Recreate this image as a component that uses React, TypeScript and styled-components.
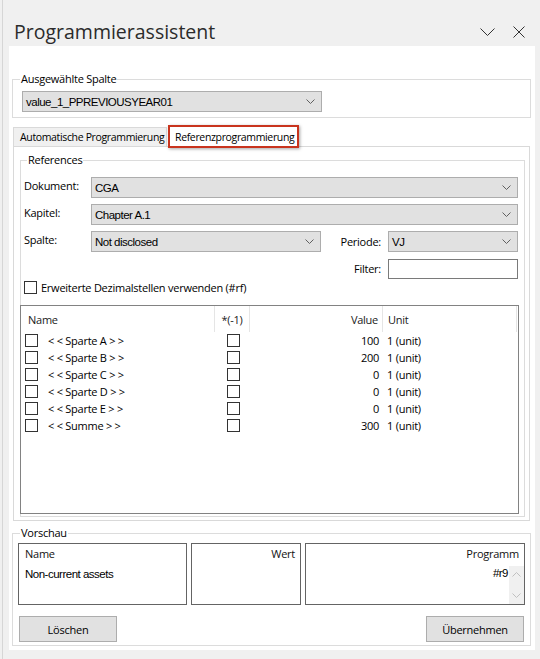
import React from "react";
import styled, { createGlobalStyle } from "styled-components";

const ui = `"Open Sans", "Noto Sans", sans-serif`;
const classic = `"Liberation Sans", Arial, sans-serif`;

const Global = createGlobalStyle`
  html, body { margin: 0; padding: 0; background: #f0f0f0; }
  body { font-family: ${ui}; font-size: 11px; letter-spacing: -0.25px; color: #000; }
  * { box-sizing: border-box; }
`;

const Shell = styled.div`
  width: 540px;
  height: 659px;
  background: #f0f0f0;
  display: flex;
  overflow: hidden;
`;

const EdgeLine = styled.div`
  flex: none;
  width: 1px;
  margin-left: 2px;
  background: #d6d6d6;
`;

const Window = styled.div`
  flex: 1;
  display: flex;
  flex-direction: column;
  padding: 0 5px 0 6px;
`;

const TitleBar = styled.div`
  height: 46px;
  display: flex;
  align-items: flex-end;
  justify-content: space-between;
`;

const Title = styled.div`
  font-family: ${ui};
  font-size: 19.5px;
  letter-spacing: 0;
  line-height: 28px;
  color: #2b2b2b;
  padding-left: 5px;
`;

const Controls = styled.div`
  display: flex;
`;

const IconButton = styled.div`
  width: 32px;
  height: 28px;
  display: flex;
  align-items: center;
  justify-content: center;
  color: #333;
`;

const Panel = styled.div`
  width: 526px;
  height: 604px;
  background: #fff;
  padding: 26px 4px 4px 3px;
  display: flex;
  flex-direction: column;
`;

const Group = styled.fieldset<{ $pad: string; $top?: number }>`
  margin: ${(p) => p.$top || 0}px 0 0 0;
  min-width: 0;
  border: 1px solid #dcdcdc;
  padding: ${(p) => p.$pad};
`;

const Legend = styled.legend<{ $shift: number }>`
  padding: 0 1px;
  margin-left: ${(p) => p.$shift}px;
  font-size: 11px;
  line-height: 14px;
  color: #000;
`;

const Select = styled.div<{ $w?: number }>`
  height: 21px;
  width: ${(p) => (p.$w ? `${p.$w}px` : "auto")};
  background: #e1e1e1;
  border: 1px solid #adadad;
  display: flex;
  align-items: center;
  justify-content: space-between;
  padding: 0 6px 0 3px;
  font-family: ${classic};
  font-size: 11.5px;
  letter-spacing: -0.5px;
  color: #000;
`;

const Chevron = () => (
  <svg width="9" height="5" viewBox="0 0 9 5">
    <path d="M0.5 0.5 L4.5 4.5 L8.5 0.5" fill="none" stroke="#606060" strokeWidth="1" />
  </svg>
);

const Tabs = styled.div`
  margin: 7px 1px 0 1px;
  display: flex;
  flex-direction: column;
`;

const TabStrip = styled.div`
  height: 21px;
  display: flex;
  align-items: flex-end;
  gap: 1px;
`;

const Tab = styled.div<{ $active?: boolean; $w: number }>`
  width: ${(p) => p.$w}px;
  height: ${(p) => (p.$active ? 23 : 19)}px;
  margin-bottom: ${(p) => (p.$active ? -2 : 0)}px;
  position: relative;
  z-index: ${(p) => (p.$active ? 2 : 0)};
  background: ${(p) => (p.$active ? "#fff" : "#f0f0f0")};
  border: ${(p) => (p.$active ? "2px solid #c9341e" : "1px solid #d9d9d9")};
  border-bottom: ${(p) => (p.$active ? "2px solid #c9341e" : "none")};
  box-shadow: ${(p) => (p.$active ? "1px 1px 3px rgba(0,0,0,0.35)" : "none")};
  padding: 0 0 0 ${(p) => (p.$active ? 5 : 6)}px;
  display: flex;
  align-items: center;
  font-size: 10.5px;
  letter-spacing: -0.35px;
  white-space: nowrap;
`;

const TabPage = styled.div`
  border: 1px solid #d9d9d9;
  background: #fff;
  padding: 6px 4px 3px 6px;
`;

const FormGrid = styled.div`
  display: grid;
  grid-template-columns: 67px 230px 67px 130px;
  grid-template-rows: 21px 21px 21px 21px;
  row-gap: 6px;
`;

const Label = styled.div<{ $right?: boolean; $col?: string; $mid?: boolean }>`
  grid-column: ${(p) => p.$col || "auto"};
  align-self: ${(p) => (p.$mid ? "center" : "start")};
  padding-top: ${(p) => (p.$mid ? 0 : 1)}px;
  line-height: 15px;
  text-align: ${(p) => (p.$right ? "right" : "left")};
  padding-right: ${(p) => (p.$right ? 7 : 0)}px;
  font-size: 11px;
`;

const Cell = styled.div<{ $col: string }>`
  grid-column: ${(p) => p.$col};
  display: flex;
  flex-direction: column;
  justify-content: flex-end;
`;

const TextInput = styled.div`
  height: 20px;
  border: 1px solid #7a7a7a;
  background: #fff;
`;

const CheckRow = styled.div`
  margin-top: 2px;
  height: 13px;
  display: flex;
  align-items: center;
  gap: 4px;
  font-size: 11px;
`;

const Box = styled.span`
  flex: none;
  display: inline-block;
  width: 13px;
  height: 13px;
  border: 1px solid #333;
  background: #fff;
`;

const List = styled.div`
  margin: 11px 0 0 -4px;
  height: 209px;
  border: 1px solid #828282;
  background: #fff;
`;

const ListRow = styled.div<{ $head?: boolean }>`
  display: grid;
  grid-template-columns: 194px 35px 133px 134px;
  height: ${(p) => (p.$head ? 26 : 17)}px;
  font-size: 11px;
`;

const HeadCell = styled.div<{ $align: string; $pad?: string }>`
  display: flex;
  align-items: center;
  justify-content: ${(p) => p.$align};
  padding: ${(p) => p.$pad || "0"};
  border-right: 1px solid #e5e5e5;
  color: #1a1a1a;
`;

const RowCell = styled.div<{ $align: string; $pad?: string }>`
  display: flex;
  align-items: center;
  justify-content: ${(p) => p.$align};
  padding: ${(p) => p.$pad || "0"};
  gap: 10px;
  white-space: pre;
`;

const Preview = styled.div`
  display: grid;
  grid-template-columns: 169px 110px 1fr;
  column-gap: 4px;
  height: 62px;
`;

const PreviewBox = styled.div`
  border: 1px solid #646464;
  display: flex;
  flex-direction: column;
  min-width: 0;
`;

const PreviewLabel = styled.div<{ $right?: boolean }>`
  line-height: 16px;
  padding: 2px ${(p) => (p.$right ? 5 : 6)}px 0 6px;
  text-align: ${(p) => (p.$right ? "right" : "left")};
  font-size: 11px;
  color: #111;
`;

const PreviewValue = styled.div`
  margin-top: 5px;
  padding-left: 6px;
  line-height: 14px;
  font-family: ${classic};
  font-size: 11.5px;
  letter-spacing: -0.5px;
`;

const CodeArea = styled.div`
  flex: 1;
  margin-top: 4px;
  display: flex;
`;

const CodeText = styled.div`
  flex: 1;
  text-align: right;
  padding: 0 1px 0 0;
  line-height: 14px;
  font-family: ${classic};
  font-size: 11.5px;
  letter-spacing: -0.5px;
`;

const ScrollTrack = styled.div`
  width: 15px;
  background: #f0f0f0;
  display: flex;
  flex-direction: column;
  justify-content: space-between;
`;

const ScrollArrow = styled.div`
  height: 17px;
  display: flex;
  align-items: center;
  justify-content: center;
`;

const ButtonRow = styled.div`
  margin-top: 11px;
  display: flex;
  justify-content: space-between;
  padding: 0 1px;
`;

const Button = styled.div`
  width: 98px;
  height: 26px;
  background: #e1e1e1;
  border: 1px solid #adadad;
  display: flex;
  align-items: center;
  justify-content: center;
  font-size: 11px;
`;

const rows = [
  { name: "< < Sparte A > >", value: "100" },
  { name: "< < Sparte B > >", value: "200" },
  { name: "< < Sparte C > >", value: "0" },
  { name: "< < Sparte D > >", value: "0" },
  { name: "< < Sparte E > >", value: "0" },
  { name: "< < Summe > >", value: "300" },
];

export default function App() {
  return (
    <>
      <Global />
      <Shell>
        <EdgeLine />
        <Window>
          <TitleBar>
            <Title>Programmierassistent</Title>
            <Controls>
              <IconButton>
                <svg width="15" height="8" viewBox="0 0 15 8">
                  <path d="M0.5 0.5 L7.5 7.5 L14.5 0.5" fill="none" stroke="#333" strokeWidth="1" />
                </svg>
              </IconButton>
              <IconButton>
                <svg width="12" height="12" viewBox="0 0 12 12">
                  <path d="M0.5 0.5 L11.5 11.5 M11.5 0.5 L0.5 11.5" fill="none" stroke="#333" strokeWidth="1" />
                </svg>
              </IconButton>
            </Controls>
          </TitleBar>
          <Panel>
            <Group $pad="5px 8px 5px 9px">
              <Legend $shift={-2}>Ausgewählte Spalte</Legend>
              <Select $w={300}>
                <span>value_1_PPREVIOUSYEAR01</span>
                <Chevron />
              </Select>
            </Group>

            <Tabs>
              <TabStrip>
                <Tab $w={154}>Automatische Programmierung</Tab>
                <Tab $w={131} $active>
                  Referenzprogrammierung
                </Tab>
              </TabStrip>
              <TabPage>
                <Group $pad="10px 5px 2px 3px">
                  <Legend $shift={3}>References</Legend>
                  <FormGrid>
                    <Label>Dokument:</Label>
                    <Cell $col="2 / 5">
                      <Select>
                        <span>CGA</span>
                        <Chevron />
                      </Select>
                    </Cell>
                    <Label>Kapitel:</Label>
                    <Cell $col="2 / 5">
                      <Select>
                        <span>Chapter A.1</span>
                        <Chevron />
                      </Select>
                    </Cell>
                    <Label>Spalte:</Label>
                    <Cell $col="2 / 3">
                      <Select>
                        <span>Not disclosed</span>
                        <Chevron />
                      </Select>
                    </Cell>
                    <Label $right $mid>
                      Periode:
                    </Label>
                    <Cell $col="4 / 5">
                      <Select>
                        <span>VJ</span>
                        <Chevron />
                      </Select>
                    </Cell>
                    <Label $right $mid $col="3 / 4">
                      Filter:
                    </Label>
                    <Cell $col="4 / 5">
                      <TextInput />
                    </Cell>
                  </FormGrid>
                  <CheckRow>
                    <Box />
                    <span>Erweiterte Dezimalstellen verwenden (#rf)</span>
                  </CheckRow>
                  <List>
                    <ListRow $head>
                      <HeadCell $align="flex-start" $pad="0 0 0 7px">
                        Name
                      </HeadCell>
                      <HeadCell $align="center">*(-1)</HeadCell>
                      <HeadCell $align="flex-end" $pad="0 4px 0 0">
                        Value
                      </HeadCell>
                      <HeadCell $align="flex-start" $pad="0 0 0 5px">
                        Unit
                      </HeadCell>
                    </ListRow>
                    {rows.map((r) => (
                      <ListRow key={r.name}>
                        <RowCell $align="flex-start" $pad="0 0 0 4px">
                          <Box />
                          <span>{r.name}</span>
                        </RowCell>
                        <RowCell $align="center" $pad="0 0 0 1px">
                          <Box />
                        </RowCell>
                        <RowCell $align="flex-end" $pad="0 4px 0 0">
                          {r.value}
                        </RowCell>
                        <RowCell $align="flex-start" $pad="0 0 0 4px">
                          1 (unit)
                        </RowCell>
                      </ListRow>
                    ))}
                  </List>
                </Group>
              </TabPage>
            </Tabs>

            <Group $pad="3px 5px 3px 5px" $top={5}>
              <Legend $shift={2}>Vorschau</Legend>
              <Preview>
                <PreviewBox>
                  <PreviewLabel>Name</PreviewLabel>
                  <PreviewValue>Non-current assets</PreviewValue>
                </PreviewBox>
                <PreviewBox>
                  <PreviewLabel $right>Wert</PreviewLabel>
                </PreviewBox>
                <PreviewBox>
                  <PreviewLabel $right>Programm</PreviewLabel>
                  <CodeArea>
                    <CodeText>#r9</CodeText>
                    <ScrollTrack>
                      <ScrollArrow>
                        <svg width="9" height="5" viewBox="0 0 9 5">
                          <path d="M0.5 4.5 L4.5 0.5 L8.5 4.5" fill="none" stroke="#c0c0c0" strokeWidth="1" />
                        </svg>
                      </ScrollArrow>
                      <ScrollArrow>
                        <svg width="9" height="5" viewBox="0 0 9 5">
                          <path d="M0.5 0.5 L4.5 4.5 L8.5 0.5" fill="none" stroke="#c0c0c0" strokeWidth="1" />
                        </svg>
                      </ScrollArrow>
                    </ScrollTrack>
                  </CodeArea>
                </PreviewBox>
              </Preview>
              <ButtonRow>
                <Button>Löschen</Button>
                <Button>Übernehmen</Button>
              </ButtonRow>
            </Group>
          </Panel>
        </Window>
      </Shell>
    </>
  );
}
